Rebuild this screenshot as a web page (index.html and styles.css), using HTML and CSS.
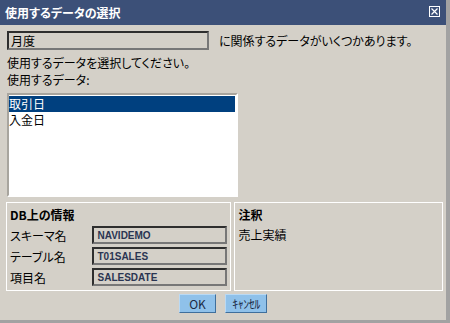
FILE: index.html
```html
<!DOCTYPE html>
<html lang="ja">
<head>
  <meta charset="UTF-8">
  <title>使用するデータの選択</title>
  <link rel="stylesheet" href="styles.css">
</head>
<body>
  <div class="dialog">
    <div class="titlebar">
      <span class="title">使用するデータの選択</span>
      <svg class="close" width="11" height="11" viewBox="0 0 11 11">
        <rect x="0.5" y="0.5" width="10" height="10" fill="none" stroke="#fff" stroke-width="1"/>
        <path d="M2.5 2.5 L8.5 8.5 M8.5 2.5 L2.5 8.5" stroke="#fff" stroke-width="1.2"/>
      </svg>
    </div>

    <div class="content">
      <div class="row-top">
        <div class="field field-wide">月度</div>
        <span>に関係するデータがいくつかあります。</span>
      </div>
      <p class="line">使用するデータを選択してください。</p>
      <p class="line">使用するデータ:</p>

      <div class="listbox">
        <div class="item selected">取引日</div>
        <div class="item">入金日</div>
      </div>

      <div class="groups">
        <div class="group group-db">
          <div class="group-title">DB上の情報</div>
          <div class="info-row">
            <span class="label">スキーマ名</span>
            <div class="field field-small">NAVIDEMO</div>
          </div>
          <div class="info-row">
            <span class="label">テーブル名</span>
            <div class="field field-small">T01SALES</div>
          </div>
          <div class="info-row">
            <span class="label">項目名</span>
            <div class="field field-small">SALESDATE</div>
          </div>
        </div>
        <div class="group group-note">
          <div class="group-title">注釈</div>
          <div class="note">売上実績</div>
        </div>
      </div>

      <div class="buttons">
        <button class="btn btn-ok">OK</button>
        <button class="btn btn-cancel">ｷｬﾝｾﾙ</button>
      </div>
    </div>
  </div>
</body>
</html>
```

FILE: styles.css
```css
* {
  box-sizing: border-box;
  margin: 0;
  padding: 0;
}

body {
  width: 450px;
  height: 323px;
  background: #a2a2a2;
  font-family: "Noto Sans CJK JP", "Noto Sans", sans-serif;
  font-size: 12px;
  font-feature-settings: "palt";
  color: #000;
  overflow: hidden;
}

.dialog {
  width: 446px;
  height: 320px;
  background: #d4d0c8;
}

.titlebar {
  height: 25px;
  background: #3c5078;
  color: #fff;
  display: flex;
  align-items: center;
  justify-content: space-between;
  padding: 0 6px 0 5px;
}

.title {
  font-weight: bold;
  font-size: 12px;
}

.close {
  margin-top: -2px;
}

.content {
  padding: 6px 3px 0 6px;
}

.row-top {
  display: flex;
  align-items: center;
  gap: 10px;
  margin-left: 1px;
}

.field {
  background: #d4d0c8;
  border: 2px solid;
  border-color: #2e2e2e #777 #777 #2e2e2e;
  display: flex;
  align-items: center;
}

.field-wide {
  width: 202px;
  height: 19px;
  padding-left: 2px;
}

.line {
  margin-left: 1px;
  height: 17px;
  line-height: 17px;
}

.row-top + .line {
  margin-top: 4px;
}

.listbox {
  margin: 5px 0 0 1px;
  width: 231px;
  height: 104px;
  background: #fff;
  border: 2px solid;
  border-color: #a8a59e #fff #fff #a8a59e;
  padding-top: 1px;
}

.item {
  height: 16px;
  line-height: 16px;
  margin-right: 1px;
}

.selected {
  background: #00407f;
  color: #fff;
}

.groups {
  display: flex;
  gap: 3px;
  margin-top: 5px;
  height: 89px;
}

.group {
  border: 1px solid #fff;
  padding: 3px 3px 0 3px;
}

.group-db {
  width: 226px;
}

.group-note {
  width: 209px;
}

.group-title {
  font-weight: bold;
  height: 17px;
  line-height: 17px;
}

.info-row {
  display: flex;
  align-items: center;
  justify-content: space-between;
  margin-top: 3px;
  height: 18px;
}

.group-title + .info-row {
  margin-top: 3px;
}

.field-small {
  width: 135px;
  height: 18px;
  padding-left: 3px;
  font-family: "Liberation Sans", sans-serif;
  font-size: 10px;
  font-weight: bold;
  color: #2a3552;
}

.note {
  margin-top: 3px;
  line-height: 17px;
}

.buttons {
  display: flex;
  justify-content: center;
  gap: 9px;
  margin-top: 3px;
  padding-right: 3px;
}

.btn {
  height: 19px;
  background: #8fc1ea;
  border: 1px solid;
  border-color: #b9d9f4 #3f6f9c #3f6f9c #b9d9f4;
  color: #1c2a44;
  font-family: "Noto Sans CJK JP", sans-serif;
  font-size: 12px;
  line-height: 15px;
}

.btn-ok {
  width: 37px;
}

.btn-cancel {
  width: 42px;
  font-size: 12px;
  letter-spacing: -0.5px;
}
```
